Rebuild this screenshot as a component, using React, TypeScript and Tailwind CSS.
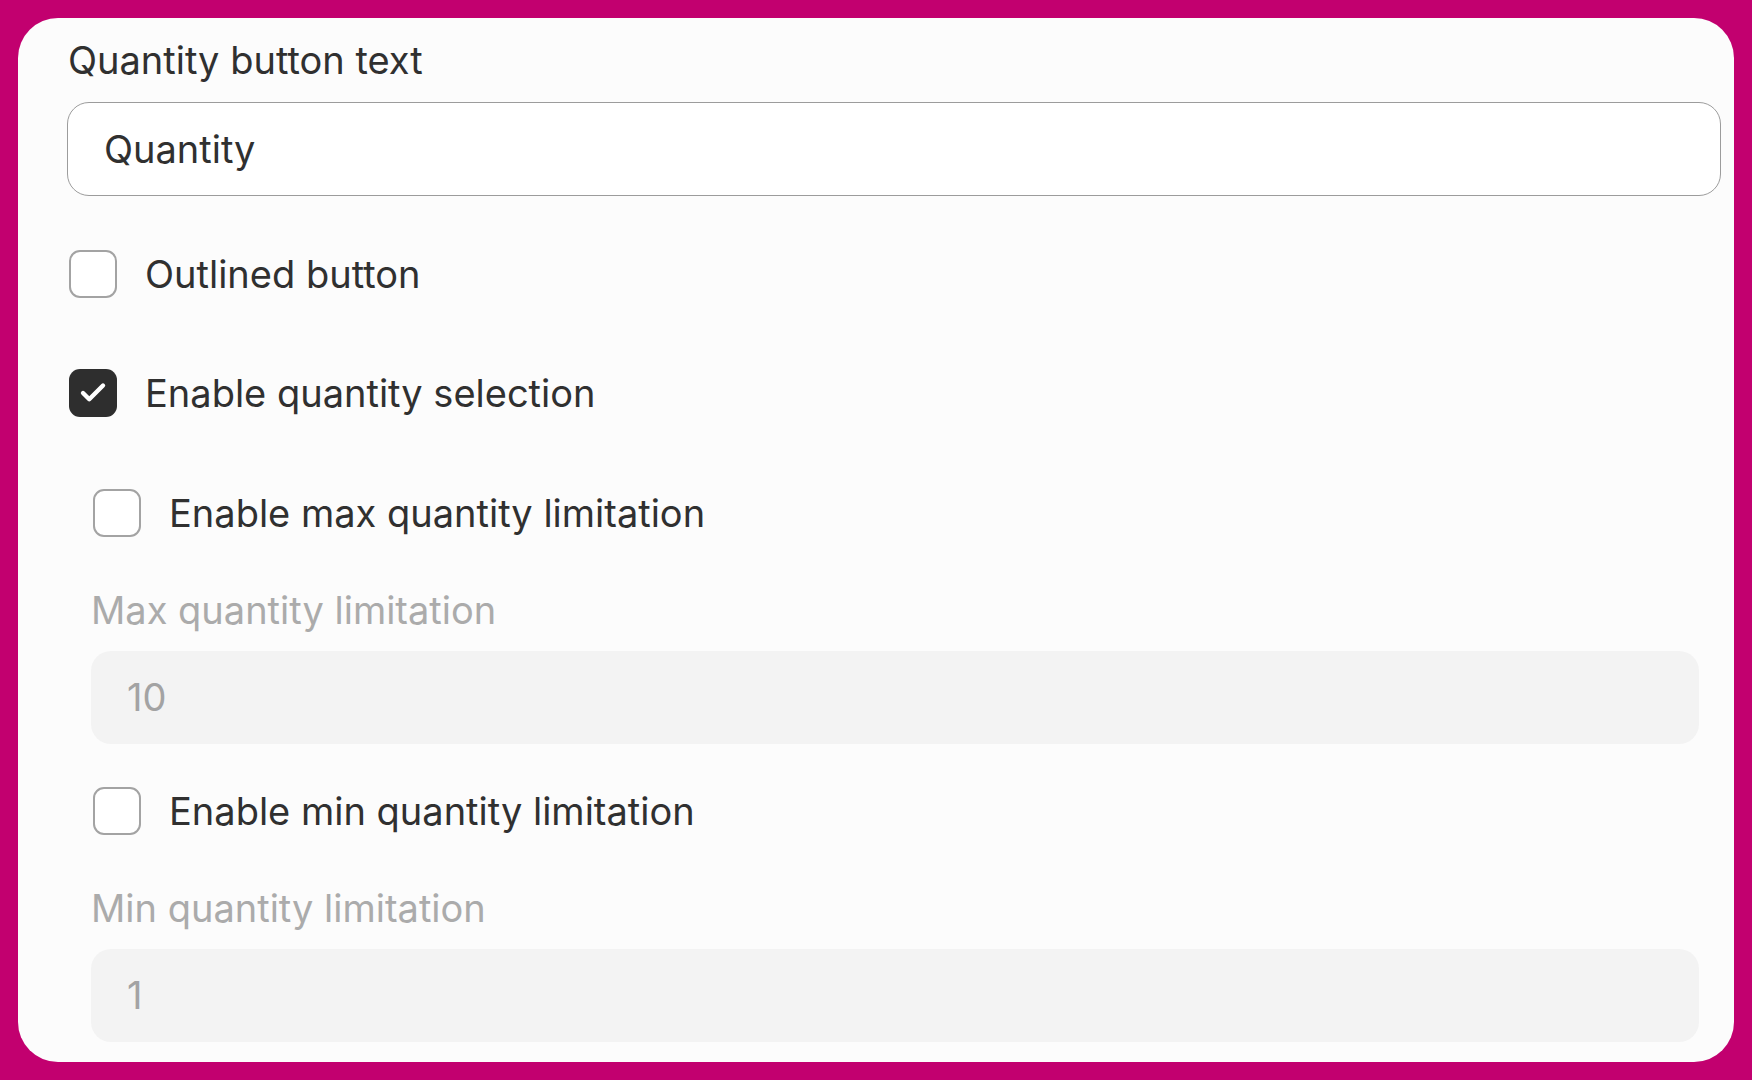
import { Check } from "lucide-react";

function Checkbox({ checked, label }: { checked?: boolean; label: string }) {
  return (
    <label className="flex items-center gap-[28px] h-[48px] pl-[2px] cursor-pointer">
      {checked ? (
        <span className="flex items-center justify-center w-[48px] h-[48px] rounded-[11px] bg-[#2e2e2e]">
          <Check className="w-[30px] h-[30px] text-white" strokeWidth={3.5} />
        </span>
      ) : (
        <span className="w-[48px] h-[48px] rounded-[11px] border-2 border-[#a3a3a3] bg-white" />
      )}
      <span className="text-[38px] leading-[44px] text-[#303030]">{label}</span>
    </label>
  );
}

function DisabledField({ label, value }: { label: string; value: string }) {
  return (
    <div className="flex flex-col">
      <div className="text-[38px] leading-[44px] text-[#ababab]">{label}</div>
      <div className="mt-[19px] h-[93px] rounded-[20px] bg-[#f3f3f3] flex items-center px-[36px] text-[38px] text-[#a3a3a3]">
        {value}
      </div>
    </div>
  );
}

export default function App() {
  return (
    <div
      className="w-[1752px] h-[1080px] bg-[#c2006f] p-[18px] overflow-hidden"
      style={{ fontFamily: "Inter, 'Noto Sans', sans-serif" }}
    >
      <div className="h-full rounded-[40px] bg-[#fcfcfc] pl-[49px] pr-[13px] pt-[20px] overflow-hidden">
        <div className="text-[38px] leading-[44px] text-[#303030] pl-[1px]">Quantity button text</div>
        <div className="mt-[20px] h-[94px] rounded-[22px] border-[1.5px] border-[#9c9c9c] bg-white flex items-center px-[36px] text-[38px] text-[#303030]">
          Quantity
        </div>

        <div className="mt-[54px]">
          <Checkbox label="Outlined button" />
        </div>
        <div className="mt-[71px]">
          <Checkbox checked label="Enable quantity selection" />
        </div>

        <div className="ml-[24px] mr-[22px]">
          <div className="mt-[72px]">
            <Checkbox label="Enable max quantity limitation" />
          </div>
          <div className="mt-[51px]">
            <DisabledField label="Max quantity limitation" value="10" />
          </div>
          <div className="mt-[43px]">
            <Checkbox label="Enable min quantity limitation" />
          </div>
          <div className="mt-[51px]">
            <DisabledField label="Min quantity limitation" value="1" />
          </div>
        </div>
      </div>
    </div>
  );
}
